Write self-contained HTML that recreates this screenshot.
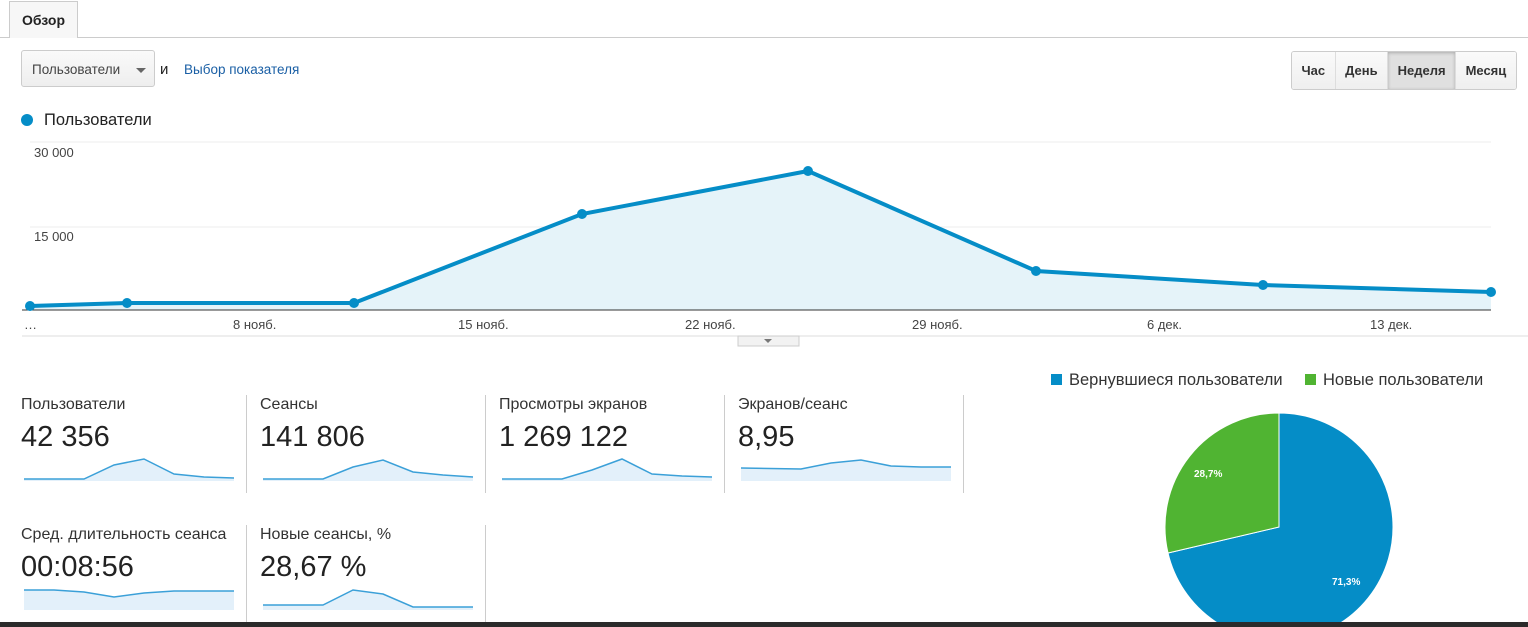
<!DOCTYPE html><html><head><meta charset="utf-8"><style>
body{margin:0;width:1528px;height:627px;overflow:hidden;background:#fff;font-family:"Liberation Sans",Arial,sans-serif;color:#222;position:relative}
.a{position:absolute}
.tab{left:9px;top:1px;width:67px;height:36px;border:1px solid #ccc;border-bottom:none;background:#f7f7f7;font-weight:bold;font-size:14px;line-height:36px;text-align:center}
.sel{left:21px;top:50px;width:134px;height:37px;border:1px solid #ccc;border-radius:3px;background:linear-gradient(#fafafa,#eee);font-size:13.5px;color:#444;line-height:37px;box-sizing:border-box;padding-left:10px}
.btns{left:1291px;top:51px;height:37px;display:flex;border:1px solid #ccc;border-radius:3px;overflow:hidden}
.btns div{font-size:13px;font-weight:bold;color:#333;padding:0 9.5px;line-height:37px;background:linear-gradient(#fafafa,#efefef);border-left:1px solid #ddd}
.btns div:first-child{border-left:none}
.lbl{font-size:16px;color:#333}
.val{font-size:29px;color:#222}
.ax{font-size:13px;color:#444}
.vl{width:1px;background:#ccc}
</style></head><body>
<div class="a" style="left:0;top:37px;width:1528px;height:1px;background:#ccc"></div>
<div class="a tab">Обзор</div>
<div class="a sel">Пользователи<span style="position:absolute;right:8px;top:17px;border:5px solid transparent;border-top:5px solid #666;border-bottom:none"></span></div>
<div class="a" style="left:160px;top:61px;font-size:15px">и</div>
<div class="a" style="left:184px;top:62px;font-size:13.5px;color:#1a5fa5">Выбор показателя</div>
<div class="a btns"><div>Час</div><div>День</div><div style="background:#e0e0e0;box-shadow:inset 0 1px 3px #aaa">Неделя</div><div>Месяц</div></div>
<div class="a" style="left:21px;top:114px;width:12px;height:12px;border-radius:50%;background:#058dc7"></div>
<div class="a" style="left:44px;top:111px;font-size:16.5px">Пользователи</div>
<svg class="a" style="left:0;top:130px" width="1528" height="240">
<line x1="30" y1="12" x2="1491" y2="12" stroke="#eee"/><line x1="30" y1="97" x2="1491" y2="97" stroke="#eee"/>
<polygon points="30,176 127,173 354,173 582,84 808,41 1036,141 1263,155 1491,162 1491,180 30,180" fill="#e5f3f9"/>
<line x1="22" y1="180" x2="1491" y2="180" stroke="#333"/>
<polyline points="30,176 127,173 354,173 582,84 808,41 1036,141 1263,155 1491,162" fill="none" stroke="#058dc7" stroke-width="4"/>
<g fill="#058dc7"><circle cx="30" cy="176" r="5"/><circle cx="127" cy="173" r="5"/><circle cx="354" cy="173" r="5"/><circle cx="582" cy="84" r="5"/><circle cx="808" cy="41" r="5"/><circle cx="1036" cy="141" r="5"/><circle cx="1263" cy="155" r="5"/><circle cx="1491" cy="162" r="5"/></g>
<line x1="22" y1="206" x2="1528" y2="206" stroke="#ddd"/>
<rect x="738" y="206" width="61" height="10" fill="#f2f2f2" stroke="#ccc"/><path d="M764 209h8l-4 4z" fill="#777"/>
</svg>
<div class="a ax" style="left:34px;top:145px">30 000</div>
<div class="a ax" style="left:34px;top:229px">15 000</div>
<div class="a ax" style="left:24px;top:317px">…</div>
<div class="a ax" style="left:233px;top:317px">8 нояб.</div>
<div class="a ax" style="left:458px;top:317px">15 нояб.</div>
<div class="a ax" style="left:685px;top:317px">22 нояб.</div>
<div class="a ax" style="left:912px;top:317px">29 нояб.</div>
<div class="a ax" style="left:1147px;top:317px">6 дек.</div>
<div class="a ax" style="left:1370px;top:317px">13 дек.</div>

<div class="a vl" style="left:246px;top:395px;height:98px"></div>
<div class="a vl" style="left:485px;top:395px;height:98px"></div>
<div class="a vl" style="left:724px;top:395px;height:98px"></div>
<div class="a vl" style="left:963px;top:395px;height:98px"></div>
<div class="a vl" style="left:246px;top:525px;height:102px"></div>
<div class="a vl" style="left:485px;top:525px;height:102px"></div>

<div class="a lbl" style="left:21px;top:396px">Пользователи</div><div class="a val" style="left:21px;top:421px">42 356</div>
<div class="a lbl" style="left:260px;top:396px">Сеансы</div><div class="a val" style="left:260px;top:421px">141 806</div>
<div class="a lbl" style="left:499px;top:396px">Просмотры экранов</div><div class="a val" style="left:499px;top:421px">1 269 122</div>
<div class="a lbl" style="left:738px;top:396px">Экранов/сеанс</div><div class="a val" style="left:738px;top:421px">8,95</div>
<div class="a lbl" style="left:21px;top:526px">Сред. длительность сеанса</div><div class="a val" style="left:21px;top:551px">00:08:56</div>
<div class="a lbl" style="left:260px;top:526px">Новые сеансы, %</div><div class="a val" style="left:260px;top:551px">28,67 %</div>

<svg class="a" style="left:0;top:0" width="960" height="627" fill="#e3f0fa" stroke-width="1.5">
<g stroke="#3ba0d8">
<polygon points="24,479 84,479 114,465 144,459 174,474 204,477 234,478 234,481 24,481" stroke="none"/><polyline fill="none" points="24,479 84,479 114,465 144,459 174,474 204,477 234,478"/>
<polygon points="263,479 323,479 353,467 383,460 413,472 443,475 473,477 473,481 263,481" stroke="none"/><polyline fill="none" points="263,479 323,479 353,467 383,460 413,472 443,475 473,477"/>
<polygon points="502,479 562,479 592,470 622,459 652,474 682,476 712,477 712,481 502,481" stroke="none"/><polyline fill="none" points="502,479 562,479 592,470 622,459 652,474 682,476 712,477"/>
<polygon points="741,468 801,469 831,463 861,460 891,466 921,467 951,467 951,481 741,481" stroke="none"/><polyline fill="none" points="741,468 801,469 831,463 861,460 891,466 921,467 951,467"/>
<polygon points="24,590 54,590 84,592 114,597 144,593 174,591 204,591 234,591 234,610 24,610" stroke="none"/><polyline fill="none" points="24,590 54,590 84,592 114,597 144,593 174,591 204,591 234,591"/>
<polygon points="263,605 323,605 353,590 383,594 413,607 443,607 473,607 473,610 263,610" stroke="none"/><polyline fill="none" points="263,605 323,605 353,590 383,594 413,607 443,607 473,607"/>
</g></svg>

<div class="a" style="left:1051px;top:374px;width:11px;height:11px;background:#058dc7"></div>
<div class="a" style="left:1069px;top:371px;font-size:16.5px;color:#333">Вернувшиеся пользователи</div>
<div class="a" style="left:1305px;top:374px;width:11px;height:11px;background:#50b432"></div>
<div class="a" style="left:1323px;top:371px;font-size:16.5px;color:#333">Новые пользователи</div>
<svg class="a" style="left:0;top:0" width="1528" height="627">
<path d="M1279 527 L1279 413 A114 114 0 1 1 1168 553 Z" fill="#058dc7" stroke="#fff"/>
<path d="M1279 527 L1168 553 A114 114 0 0 1 1279 413 Z" fill="#50b432" stroke="#fff"/>
<text x="1194" y="477" font-size="10" font-weight="bold" fill="#fff" font-family="Liberation Sans">28,7%</text>
<text x="1332" y="585" font-size="10" font-weight="bold" fill="#fff" font-family="Liberation Sans">71,3%</text>
</svg>
<div class="a" style="left:0;top:622px;width:1528px;height:5px;background:#2b2b2b"></div>
</body></html>
